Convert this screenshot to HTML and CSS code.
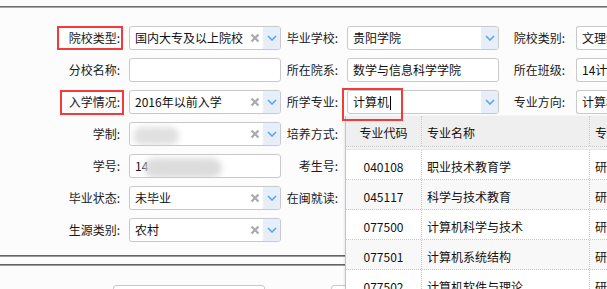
FILE: index.html
```html
<!DOCTYPE html>
<html>
<head>
<meta charset="utf-8">
<link rel="stylesheet" href="styles.css">
</head>
<body>
<div class="topline"></div>
<div class="form">
  <div class="lbl">院校类型:</div>
  <div class="box"><span class="val">国内大专及以上院校</span><span class="x"><svg width="10" height="10" viewBox="0 0 10 10"><path d="M1.5 1.5L8.5 8.5M8.5 1.5L1.5 8.5"/></svg></span><span class="arr"><svg width="10" height="6" viewBox="0 0 10 6"><path d="M1 1L5 5L9 1"/></svg></span></div>
  <div class="lbl">毕业学校:</div>
  <div class="box"><span class="val">贵阳学院</span><span class="arr"><svg width="10" height="6" viewBox="0 0 10 6"><path d="M1 1L5 5L9 1"/></svg></span></div>
  <div class="lbl lbl3">院校类别:</div>
  <div class="box open"><span class="val">文理综合类</span></div>

  <div class="lbl">分校名称:</div>
  <div class="box"><span class="val"></span></div>
  <div class="lbl">所在院系:</div>
  <div class="box"><span class="val">数学与信息科学学院</span></div>
  <div class="lbl lbl3">所在班级:</div>
  <div class="box open"><span class="val">14计算机科学与技术</span></div>

  <div class="lbl">入学情况:</div>
  <div class="box"><span class="val">2016年以前入学</span><span class="x"><svg width="10" height="10" viewBox="0 0 10 10"><path d="M1.5 1.5L8.5 8.5M8.5 1.5L1.5 8.5"/></svg></span><span class="arr"><svg width="10" height="6" viewBox="0 0 10 6"><path d="M1 1L5 5L9 1"/></svg></span></div>
  <div class="lbl">所学专业:</div>
  <div class="box"><span class="val">计算机<span class="caret"></span></span><span class="arr"><svg width="10" height="6" viewBox="0 0 10 6"><path d="M1 1L5 5L9 1"/></svg></span></div>
  <div class="lbl lbl3">专业方向:</div>
  <div class="box open"><span class="val">计算机科学</span></div>

  <div class="lbl">学制:</div>
  <div class="box"><span class="val"><span class="blur b1"></span></span><span class="x"><svg width="10" height="10" viewBox="0 0 10 10"><path d="M1.5 1.5L8.5 8.5M8.5 1.5L1.5 8.5"/></svg></span><span class="arr"><svg width="10" height="6" viewBox="0 0 10 6"><path d="M1 1L5 5L9 1"/></svg></span></div>
  <div class="lbl">培养方式:</div>
  <div class="box"><span class="val"></span></div>
  <div class="lbl lbl3"></div>
  <div></div>

  <div class="lbl">学号:</div>
  <div class="box"><span class="val">14<span class="blur b2"></span></span></div>
  <div class="lbl">考生号:</div>
  <div class="box"><span class="val"></span></div>
  <div class="lbl lbl3"></div>
  <div></div>

  <div class="lbl">毕业状态:</div>
  <div class="box"><span class="val">未毕业</span><span class="x"><svg width="10" height="10" viewBox="0 0 10 10"><path d="M1.5 1.5L8.5 8.5M8.5 1.5L1.5 8.5"/></svg></span><span class="arr"><svg width="10" height="6" viewBox="0 0 10 6"><path d="M1 1L5 5L9 1"/></svg></span></div>
  <div class="lbl">在闽就读:</div>
  <div class="box"><span class="val"></span></div>
  <div class="lbl lbl3"></div>
  <div></div>

  <div class="lbl">生源类别:</div>
  <div class="box"><span class="val">农村</span><span class="x"><svg width="10" height="10" viewBox="0 0 10 10"><path d="M1.5 1.5L8.5 8.5M8.5 1.5L1.5 8.5"/></svg></span><span class="arr"><svg width="10" height="6" viewBox="0 0 10 6"><path d="M1 1L5 5L9 1"/></svg></span></div>
  <div></div>
  <div></div>
  <div></div>
  <div></div>

  <span class="mark m1"></span>
  <span class="mark m2"></span>
  <span class="mark m3"></span>
</div>
<div class="sep sep1"></div>
<div class="sep sep2"></div>
<div class="bottom">
  <div class="box"></div>
  <div class="box"></div>
</div>

<div class="panel">
  <div class="prow hdr"><div class="c1">专业代码</div><div class="c2">专业名称</div><div class="c3">专业层次</div></div>
  <div class="gap"></div>
  <div class="prow"><div class="c1">040108</div><div class="c2">职业技术教育学</div><div class="c3">研究生</div></div>
  <div class="prow alt"><div class="c1">045117</div><div class="c2">科学与技术教育</div><div class="c3">研究生</div></div>
  <div class="prow"><div class="c1">077500</div><div class="c2">计算机科学与技术</div><div class="c3">研究生</div></div>
  <div class="prow alt"><div class="c1">077501</div><div class="c2">计算机系统结构</div><div class="c3">研究生</div></div>
  <div class="prow"><div class="c1">077502</div><div class="c2">计算机软件与理论</div><div class="c3">研究生</div></div>
</div>
</body>
</html>
```

FILE: styles.css
```css
html, body {
  margin: 0;
  padding: 0;
}
body {
  width: 607px;
  height: 289px;
  overflow: hidden;
  position: relative;
  background: #fcfcfc;
  font-family: "Noto Sans CJK SC", "Microsoft YaHei", sans-serif;
  font-size: 12px;
  color: #111;
}
.topline {
  margin-top: 6px;
  height: 0;
  border-top: 1px solid #6e6e6e;
  border-bottom: 1px solid #a8a8a8;
}
.form {
  position: relative;
  display: grid;
  grid-template-columns: 129px 152px 66px 152px 77px 31px;
  grid-auto-rows: 24px;
  row-gap: 8px;
  padding-top: 18px;
}
.lbl {
  text-align: right;
  padding-right: 9px;
  line-height: 24px;
  white-space: nowrap;
  color: #1a1a1a;
}
.lbl3 {
  padding-right: 11px;
}
.box {
  box-sizing: border-box;
  height: 24px;
  border: 1px solid #c9c9c9;
  border-radius: 3px;
  background: #fff;
  display: flex;
  align-items: stretch;
  overflow: hidden;
}
.box.open {
  border-right: none;
  border-radius: 3px 0 0 3px;
}
.val {
  flex: 1;
  padding-left: 5px;
  line-height: 22px;
  white-space: nowrap;
  overflow: hidden;
  position: relative;
}
.x {
  width: 17px;
  display: flex;
  align-items: center;
  justify-content: center;
}
.x svg path {
  stroke: #a9a9a9;
  stroke-width: 2.2;
  fill: none;
}
.arr {
  width: 17px;
  background: #e6eff9;
  display: flex;
  align-items: center;
  justify-content: center;
}
.arr svg path {
  stroke: #5da5e8;
  stroke-width: 1.6;
  fill: none;
}
.caret {
  display: inline-block;
  width: 1px;
  height: 14px;
  background: #000;
  vertical-align: -3px;
  margin-left: 1px;
}
.blur {
  display: inline-block;
  vertical-align: middle;
  background: #dcdcdc;
  filter: blur(3px);
  border-radius: 10px;
}
.b1 {
  width: 46px;
  height: 18px;
  margin-left: -2px;
  background: #e0e0e0;
}
.b2 {
  width: 78px;
  height: 20px;
  margin-left: -4px;
}
.mark {
  position: absolute;
  z-index: 5;
  box-sizing: border-box;
  border: 2px solid #f23c3c;
}
.m1 { left: 57px; top: 18px; width: 66px; height: 24px; }
.m2 { left: 60px; top: 82px; width: 64px; height: 25px; }
.m3 { left: 342px; top: 80px; width: 61px; height: 33px; }
.sep {
  height: 0;
  border-top: 1px solid #666;
  border-bottom: 1px solid #9a9a9a;
}
.sep1 { margin-top: 13px; }
.sep2 { margin-top: 7px; }
.bottom {
  display: flex;
  gap: 66px;
  padding-left: 113px;
  margin-top: 19px;
}
.bottom .box {
  width: 152px;
  flex: none;
}
.panel {
  position: absolute;
  left: 345px;
  top: 116px;
  width: 261px;
  height: 173px;
  overflow: hidden;
  background: #fff;
  border-left: 1px solid #c4c4c4;
  box-shadow: -1px 0 2px rgba(0,0,0,0.08);
}
.prow {
  display: grid;
  grid-template-columns: 76px 168px 17px;
  height: 30px;
  box-sizing: border-box;
  border-bottom: 1px dotted #c8c8c8;
  color: #111;
}
.prow > div {
  line-height: 33px;
  white-space: nowrap;
  overflow: hidden;
  border-right: 1px dotted #c8c8c8;
}
.prow > div.c3 {
  border-right: none;
}
.prow.alt {
  background: #f8f8f8;
}
.hdr {
  height: 31px;
  background: #efefef;
}
.hdr > div {
  line-height: 33px;
}
.gap {
  height: 2px;
  background: #f3f3f3;
  border-bottom: 1px solid #e6e6e6;
}
.c1 {
  text-align: center;
}
.c2, .c3 {
  padding-left: 5px;
}
```
